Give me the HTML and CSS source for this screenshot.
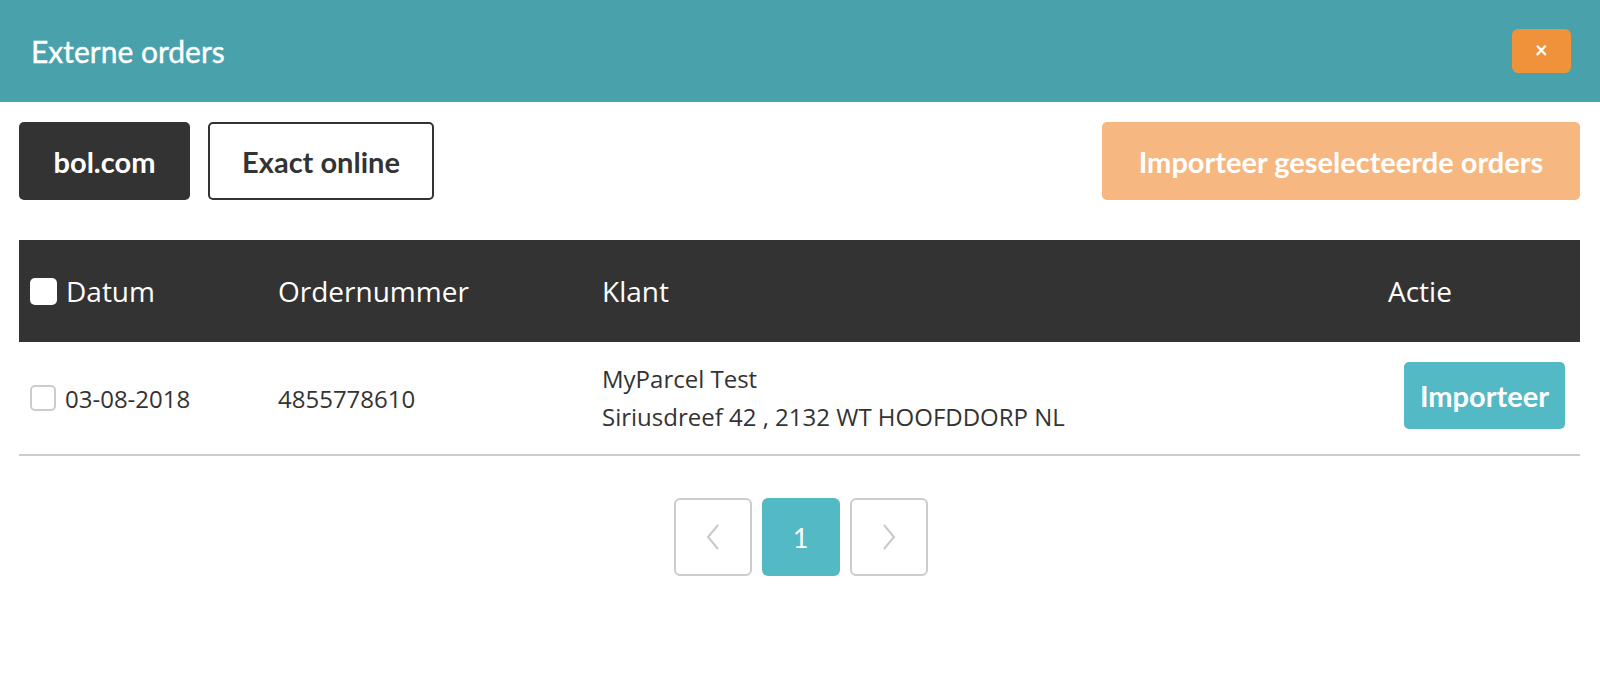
FILE: index.html
```html
<!DOCTYPE html>
<html lang="nl">
<head>
<meta charset="utf-8">
<title>Externe orders</title>
<link rel="stylesheet" href="styles.css">
</head>
<body>
<div class="modal">
  <header class="modal-header">
    <h1 class="modal-title">Externe orders</h1>
    <button class="close-btn" type="button">×</button>
  </header>
  <div class="modal-body">
    <div class="toolbar">
      <button class="btn btn-dark" type="button">bol.com</button>
      <button class="btn btn-outline" type="button">Exact online</button>
      <button class="btn btn-import" type="button">Importeer geselecteerde orders</button>
    </div>
    <div class="table">
      <div class="thead">
        <div class="cell cell-check"><span class="check check-head"></span>Datum</div>
        <div class="cell">Ordernummer</div>
        <div class="cell">Klant</div>
        <div class="cell">Actie</div>
      </div>
      <div class="trow">
        <div class="cell cell-check"><span class="check check-row"></span>03-08-2018</div>
        <div class="cell">4855778610</div>
        <div class="cell cell-klant">
          <div>MyParcel Test</div>
          <div>Siriusdreef 42 , 2132 WT HOOFDDORP NL</div>
        </div>
        <div class="cell cell-action"><button class="btn-row" type="button">Importeer</button></div>
      </div>
    </div>
    <nav class="pagination">
      <span class="page page-arrow">
        <svg width="16" height="28" viewBox="0 0 16 28"><polyline points="13,2 3,14 13,26" fill="none" stroke="#c8c8c8" stroke-width="2"/></svg>
      </span>
      <span class="page page-active">1</span>
      <span class="page page-arrow">
        <svg width="16" height="28" viewBox="0 0 16 28"><polyline points="3,2 13,14 3,26" fill="none" stroke="#c8c8c8" stroke-width="2"/></svg>
      </span>
    </nav>
  </div>
</div>
</body>
</html>
```
FILE: styles.css
```css
* { box-sizing: border-box; }
html, body { margin: 0; padding: 0; background: #fff; }
body { font-family: "Open Sans", "Liberation Sans", sans-serif; color: #333; }

.modal-header {
  height: 102px;
  background: #48a1ab;
  display: flex;
  align-items: center;
  justify-content: space-between;
  padding: 0 29px 0 31px;
}
.modal-title {
  margin: 0;
  font-family: Lato, "Open Sans", sans-serif;
  font-weight: 400;
  font-size: 30px;
  color: #fff;
  -webkit-text-stroke: 0.4px #fff;
}
.close-btn {
  width: 59px;
  height: 44px;
  border: 0;
  border-radius: 6px;
  background: #f0923a;
  color: #fff;
  font-family: Lato, sans-serif;
  font-weight: 700;
  font-size: 22px;
  line-height: 1;
  padding: 0 0 3px;
}

.modal-body { padding: 20px 20px 0 19px; }

.toolbar {
  display: flex;
  gap: 18px;
  height: 78px;
}
.btn {
  height: 78px;
  border-radius: 5px;
  font-family: Lato, sans-serif;
  font-weight: 700;
  font-size: 29px;
  padding: 0;
  border: 0;
}
.btn-dark { width: 171px; background: #333; color: #fff; }
.btn-outline { width: 226px; background: #fff; color: #333; border: 2px solid #333; }
.btn-import { width: 478px; margin-left: auto; background: #f6b880; color: #fff; }

.table { margin-top: 40px; }
.thead, .trow {
  display: grid;
  grid-template-columns: 248px 324px 786px 1fr;
  align-items: center;
}
.thead {
  height: 102px;
  background: #333;
  color: #fff;
  font-size: 28px;
}
.trow {
  height: 114px;
  border-bottom: 2px solid #ccc;
  font-size: 24px;
  color: #333;
}
.cell { padding-left: 11px; }
.cell-check { display: flex; align-items: center; gap: 9px; }
.check {
  display: inline-block;
  width: 26px;
  height: 26px;
  border-radius: 5px;
  flex: none;
}
.check-head { background: #fff; width: 27px; height: 27px; }
.check-row { background: #fff; border: 2px solid #ccc; }
.cell-klant { line-height: 38px; }
.cell-action { display: flex; justify-content: flex-end; padding-right: 15px; padding-bottom: 6px; }
.btn-row {
  width: 161px;
  height: 67px;
  border: 0;
  border-radius: 5px;
  background: #53b9c5;
  color: #fff;
  font-family: Lato, sans-serif;
  font-weight: 700;
  font-size: 29px;
  padding: 0;
}

.pagination {
  margin-top: 42px;
  display: flex;
  justify-content: center;
  gap: 10px;
  padding-left: 2px;
}
.page {
  width: 78px;
  height: 78px;
  border-radius: 6px;
  display: flex;
  align-items: center;
  justify-content: center;
}
.page-arrow { border: 2px solid #ccc; background: #fff; }
.page-active {
  background: #53b9c5;
  color: #fff;
  font-family: Lato, sans-serif;
  font-size: 27px;
  font-weight: 400;
}
```
